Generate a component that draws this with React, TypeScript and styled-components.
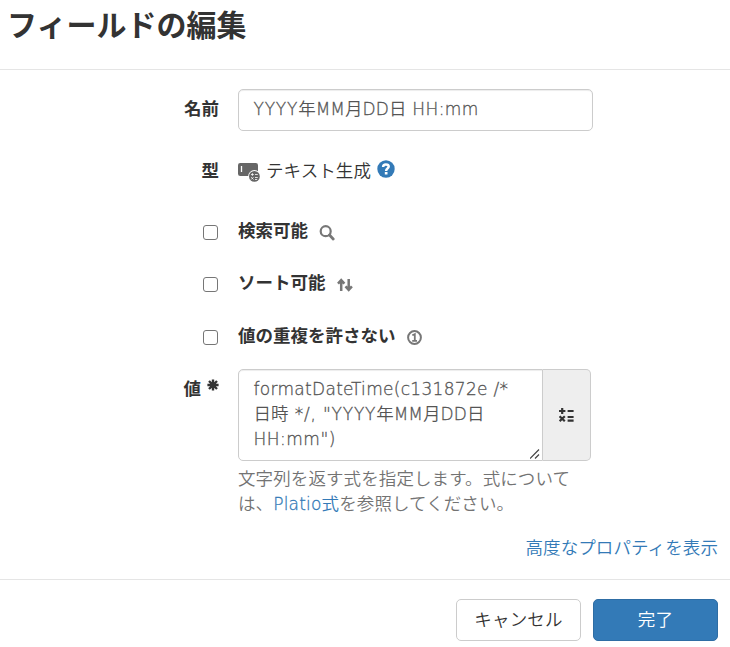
import React from 'react';
import styled, { createGlobalStyle } from 'styled-components';

const GlobalStyle = createGlobalStyle`
  *, *::before, *::after { box-sizing: border-box; }
  body {
    margin: 0;
    background: #fff;
    color: #333;
    font-family: 'Noto Sans CJK JP', sans-serif;
    font-size: 17.5px;
    font-weight: 350;
    line-height: 25px;
  }
`;

const Dialog = styled.div`
  width: 730px;
  height: 647px;
  overflow: hidden;
`;

const Header = styled.header`
  height: 70px;
  padding: 6px 7px 0;
  border-bottom: 1px solid #e5e5e5;
`;

const Title = styled.h1`
  margin: 0;
  font-size: 30px;
  font-weight: 700;
  line-height: 34px;
`;

const Body = styled.main`
  height: 509px;
  padding-top: 19px;
`;

const Row = styled.div<{ $height: number }>`
  display: grid;
  grid-template-columns: 219px 355px;
  column-gap: 19px;
  height: ${({ $height }) => $height}px;
`;

const Label = styled.label<{ $top?: number }>`
  padding-top: ${({ $top = 6 }) => $top}px;
  text-align: right;
  font-weight: 700;
`;

const Required = styled.svg`
  margin-left: 6px;
  vertical-align: 4px;
`;

const Latin = styled.span<{ $spacing?: number }>`
  font-family: 'DejaVu Sans', sans-serif;
  font-weight: 200;
  font-size: 17px;
  line-height: 1;
  letter-spacing: ${({ $spacing = 0 }) => $spacing}px;
  -webkit-text-stroke: 0.3px currentColor;
`;

const TextBox = styled.div`
  height: 42px;
  padding: 5px 14.5px;
  border: 1px solid #ccc;
  border-radius: 5px;
  color: #555;
  box-shadow: inset 0 1px 1px rgba(0, 0, 0, 0.075);
  white-space: nowrap;
`;

const TypeValue = styled.div`
  display: flex;
  align-items: flex-start;
  padding-top: 7px;
  letter-spacing: 0.1px;
  white-space: nowrap;

  > svg:first-child { margin: 6px 6px 0 0; }
  > svg:last-child { margin: 3px 0 0 6px; }
`;

const CheckCell = styled.div`
  display: flex;
  justify-content: flex-end;
  padding: 11px 1px 0 0;
`;

const Checkbox = styled.input.attrs({ type: 'checkbox' })`
  appearance: none;
  width: 15px;
  height: 15px;
  margin: 0;
  border: 1px solid #767676;
  border-radius: 3px;
  background: #fff;
`;

const CheckLabel = styled.div<{ $gap: number }>`
  display: flex;
  align-items: flex-start;
  gap: ${({ $gap }) => $gap}px;
  padding-top: 3px;
  font-weight: 700;

  > svg { margin-top: 8px; }
`;

const Formula = styled.div`
  display: flex;
  width: 353px;
  height: 92px;
`;

const FormulaText = styled.div`
  position: relative;
  width: 305px;
  padding: 5px 0 0 14.5px;
  border: 1px solid #ccc;
  border-radius: 5px 0 0 5px;
  color: #555;
  box-shadow: inset 0 1px 1px rgba(0, 0, 0, 0.075);
  white-space: nowrap;
`;

const FormulaLine = styled.div`
  height: 25px;
`;

const Grip = styled.svg`
  position: absolute;
  right: 2px;
  bottom: 1px;
`;

const Addon = styled.button`
  display: flex;
  align-items: center;
  justify-content: center;
  width: 48px;
  padding: 0;
  border: 1px solid #ccc;
  border-left: 0;
  border-radius: 0 5px 5px 0;
  background: #eee;
`;

const Help = styled.p`
  margin: 4px 0 0;
  color: #737373;
  letter-spacing: 0.1px;
  white-space: nowrap;
`;

const Link = styled.a`
  color: #337ab7;
  text-decoration: none;
`;

const Advanced = styled.div`
  padding: 0 12px;
  text-align: right;
  letter-spacing: 0.1px;
`;

const Footer = styled.footer`
  display: flex;
  justify-content: flex-end;
  gap: 12px;
  padding: 19px 12px 0;
  border-top: 1px solid #e5e5e5;
`;

const Button = styled.button<{ $primary?: boolean }>`
  width: 125px;
  height: 42px;
  padding: 0 0 4px;
  border: 1px solid ${({ $primary }) => ($primary ? '#2e6da4' : '#ccc')};
  border-radius: 5px;
  background: ${({ $primary }) => ($primary ? '#337ab7' : '#fff')};
  color: ${({ $primary }) => ($primary ? '#fff' : '#333')};
  font: inherit;
  letter-spacing: 0.2px;
`;

const TypeIcon = () => (
  <svg width="22" height="20" viewBox="0 0 22 20">
    <rect x="0" y="0" width="20" height="13" rx="2.2" fill="#666" />
    <path d="M3.5 3v6" stroke="#fff" strokeWidth="1.3" />
    <circle cx="16.4" cy="13.4" r="6.3" fill="#fff" />
    <circle cx="16.4" cy="13.4" r="5.4" fill="#666" />
    <path d="M13 11.5h2.8M14.4 10.1v2.8M17 11.5h2.8M13.2 14.2l2.3 2.3M15.5 14.2l-2.3 2.3M17 14.5h2.8M17 16.5h2.2" stroke="#fff" strokeWidth=".8" />
  </svg>
);

const HelpIcon = () => (
  <svg width="18" height="18" viewBox="0 0 18 18">
    <circle cx="9" cy="9" r="8.7" fill="#337ab7" />
    <path d="M6.1 7C6.1 5.2 7.2 4.4 8.9 4.4c1.8 0 2.8.8 2.8 2.2 0 1.9-2.5 1.8-2.5 3.8v.6" fill="none" stroke="#fff" strokeWidth="2.5" />
    <path d="M7.8 12h2.7v2.5H7.8z" fill="#fff" />
  </svg>
);

const SearchIcon = () => (
  <svg width="16" height="16" viewBox="0 0 16 16" fill="none" stroke="#777">
    <circle cx="6.7" cy="6.2" r="5" strokeWidth="2.2" />
    <path d="m10.5 10.1 3.7 3.8" strokeWidth="2.8" strokeLinecap="round" />
  </svg>
);

const SortIcon = () => (
  <svg width="16" height="15" viewBox="0 -1 16 15" fill="none" stroke="#777" strokeWidth="2.5">
    <path d="M4.2 13V2M1 5.7l3.2-3.6 3.2 3.6M11.7 1v11M8.5 8.3l3.2 3.6 3.2-3.6" />
  </svg>
);

const UniqueIcon = () => (
  <svg width="15" height="15" viewBox="0 0 15 15" fill="none" stroke="#777">
    <circle cx="7.5" cy="7.5" r="6.4" strokeWidth="2" />
    <path d="M5.3 5.3 7.8 4.2v6.6M5.2 10.9h4.8" strokeWidth="1.8" />
  </svg>
);

const OperatorsIcon = () => (
  <svg width="16" height="16" viewBox="0 0 16 16" fill="none" stroke="#333" strokeWidth="2.2">
    <path d="M0 4h6.4M3.2 1v6M8.6 4h6M.6 9.2l5.2 5M5.8 9.2l-5.2 5M8.6 10h6M8.6 13.6h6" />
  </svg>
);

const RequiredMark = () => (
  <Required width="12" height="12" viewBox="0 0 12 12" stroke="#333" strokeWidth="2.4">
    <path d="M6 .4v11.2M.4 6h11.2M2 2l8 8M10 2l-8 8" />
  </Required>
);

const checks = [
  { text: '検索可能', icon: <SearchIcon />, gap: 11, height: 52 },
  { text: 'ソート可能', icon: <SortIcon />, gap: 11, height: 53 },
  { text: '値の重複を許さない', icon: <UniqueIcon />, gap: 11, height: 50 },
];

export default function App() {
  return (
    <>
      <GlobalStyle />
      <Dialog>
        <Header>
          <Title>フィールドの編集</Title>
        </Header>
        <Body>
          <Row $height={61}>
            <Label>名前</Label>
            <TextBox>
              <Latin $spacing={0.8}>YYYY</Latin>年<Latin $spacing={-0.1}>MM</Latin>月<Latin $spacing={0.2}>DD</Latin>日<Latin $spacing={0.4}> HH:mm</Latin>
            </TextBox>
          </Row>
          <Row $height={64}>
            <Label $top={7}>型</Label>
            <TypeValue>
              <TypeIcon />
              テキスト生成
              <HelpIcon />
            </TypeValue>
          </Row>
          {checks.map(({ text, icon, gap, height }) => (
            <Row key={text} $height={height}>
              <CheckCell><Checkbox aria-label={text} /></CheckCell>
              <CheckLabel $gap={gap}>{text}{icon}</CheckLabel>
            </Row>
          ))}
          <Row $height={165}>
            <Label>値<RequiredMark /></Label>
            <div>
              <Formula>
                <FormulaText>
                  <FormulaLine><Latin $spacing={0.3}>formatDateTime(c131872e /*</Latin></FormulaLine>
                  <FormulaLine>
                    日時<Latin $spacing={0.8}> */, "YYYY</Latin>年<Latin $spacing={-0.1}>MM</Latin>月<Latin $spacing={0.2}>DD</Latin>日
                  </FormulaLine>
                  <FormulaLine><Latin $spacing={0.5}>HH:mm")</Latin></FormulaLine>
                  <Grip width="10" height="10" viewBox="0 0 10 10" stroke="#444" strokeWidth="1.2">
                    <path d="M0 9.5 9 .5M5 9.5l4-4" />
                  </Grip>
                </FormulaText>
                <Addon aria-label="式"><OperatorsIcon /></Addon>
              </Formula>
              <Help>
                文字列を返す式を指定します。式について<br />
                は、<Link><Latin $spacing={0.2}>Platio</Latin>式</Link>を参照してください。
              </Help>
            </div>
          </Row>
          <Advanced><Link>高度なプロパティを表示</Link></Advanced>
        </Body>
        <Footer>
          <Button>キャンセル</Button>
          <Button $primary>完了</Button>
        </Footer>
      </Dialog>
    </>
  );
}
